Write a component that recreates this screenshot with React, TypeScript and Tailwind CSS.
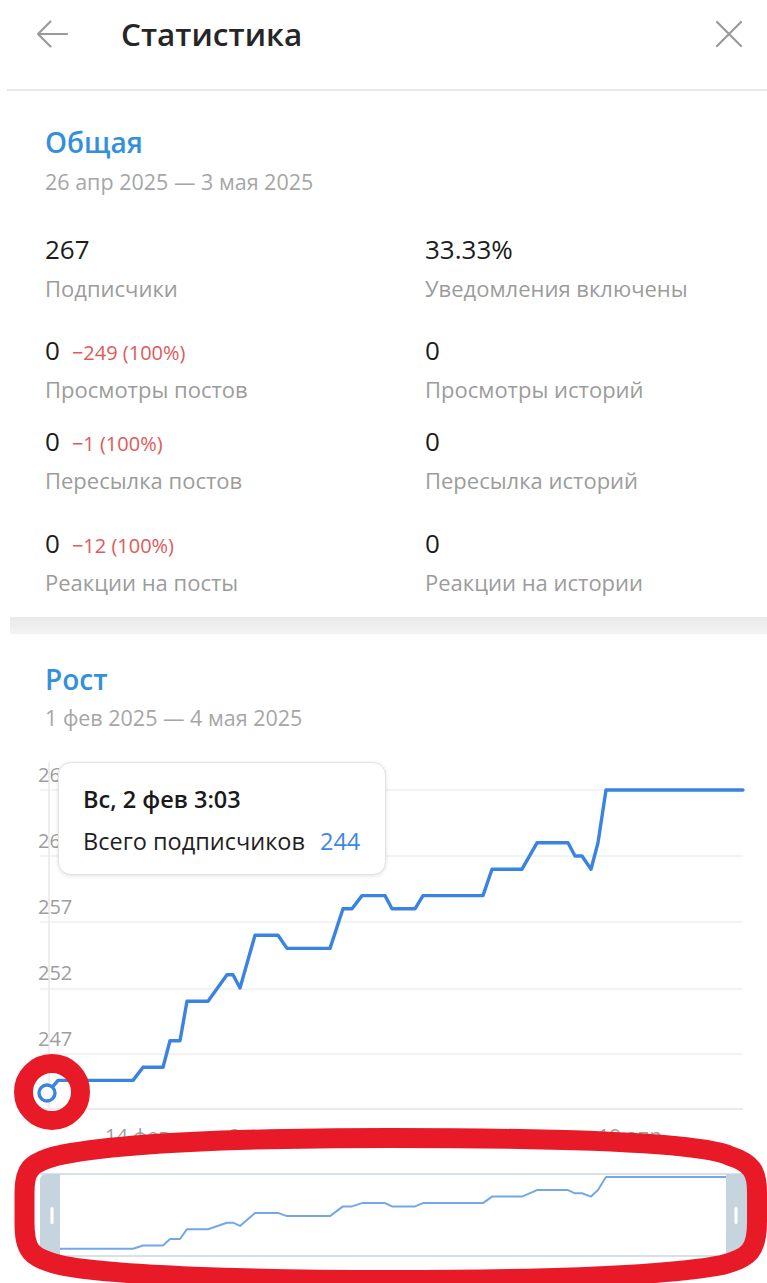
import React from "react";

// Growth series: [x position in the chart, subscribers]
const SERIES: [number, number][] = [
  [47, 244], [58, 245], [133, 245], [143, 246], [163, 246], [170, 248], [180, 248],
  [187, 251], [208, 251], [227, 253], [233, 253], [240, 252], [255, 256], [278, 256],
  [287, 255], [330, 255], [343, 258], [352, 258], [362, 259], [385, 259], [392, 258],
  [415, 258], [423, 259], [483, 259], [492, 261], [522, 261], [537, 263], [568, 263],
  [575, 262], [582, 262], [591, 261], [598, 263], [606, 267], [743, 267],
];

const mainY = (v: number) => 1052 - (v - 247) * 13.2;
const mainPath = SERIES.map(([x, v], i) => `${i ? "L" : "M"}${x} ${mainY(v).toFixed(1)}`).join(" ");
const miniY = (v: number) => 1250 - (v - 244) * 3.26;
const miniPath = SERIES.map(([x, v], i) => `${i ? "L" : "M"}${x} ${miniY(v).toFixed(1)}`).join(" ") + " L725 1175";

const GRID = [788, 854, 920, 987, 1052];
const Y_LABELS: [string, number][] = [["267", 780], ["262", 846], ["257", 912], ["252", 978], ["247", 1044]];
const X_LABELS: [string, number][] = [["14 фев", 105], ["2 мар", 229], ["18 мар", 352], ["3 апр", 476], ["19 апр", 598]];

type Stat = { value: string; delta?: string; label: string };

const ROWS: { mt: string; left: Stat; right: Stat }[] = [
  { mt: "mt-[40px]", left: { value: "267", label: "Подписчики" }, right: { value: "33.33%", label: "Уведомления включены" } },
  { mt: "mt-[34px]", left: { value: "0", delta: "−249 (100%)", label: "Просмотры постов" }, right: { value: "0", label: "Просмотры историй" } },
  { mt: "mt-[24px]", left: { value: "0", delta: "−1 (100%)", label: "Пересылка постов" }, right: { value: "0", label: "Пересылка историй" } },
  { mt: "mt-[35px]", left: { value: "0", delta: "−12 (100%)", label: "Реакции на посты" }, right: { value: "0", label: "Реакции на истории" } },
];

function StatCell({ s }: { s: Stat }) {
  return (
    <div className="flex flex-col">
      <div className="flex items-baseline h-[30px] leading-[30px]">
        <span className="text-[26px] text-[#1c1c1c]">{s.value}</span>
        {s.delta && <span className="ml-[12px] text-[20px] text-[#e05a5a]">{s.delta}</span>}
      </div>
      <div className="mt-[11px] h-[26px] leading-[26px] text-[22px] text-[#9c9c9c]">{s.label}</div>
    </div>
  );
}

export default function App() {
  return (
    <div
      className="relative w-[767px] h-[1283px] overflow-hidden bg-white"
      style={{ fontFamily: '"Open Sans", "Noto Sans", sans-serif' }}
    >
      {/* header */}
      <div className="flex items-center h-[68px]">
        <svg className="ml-[35px] w-[34px] h-[30px]" viewBox="0 0 34 30" fill="none" stroke="#9a9a9a" strokeWidth="2.2" strokeLinecap="round">
          <path d="M3 15 H32 M3 15 L15.5 2.5 M3 15 L15.5 27.5" />
        </svg>
        <div className="ml-[52px] text-[31.5px] font-semibold text-[#262626] leading-none">Статистика</div>
        <svg className="ml-auto mr-[23px] w-[30px] h-[30px]" viewBox="0 0 30 30" fill="none" stroke="#9a9a9a" strokeWidth="2.2" strokeLinecap="round">
          <path d="M3 3 L27 27 M27 3 L3 27" />
        </svg>
      </div>
      <div className="ml-[7px] mt-[21px] h-[2px] bg-[#e9e9e9]" />

      {/* overview */}
      <div className="pl-[45px]">
        <div className="mt-[34px] h-[34px] leading-[34px] text-[28px] font-semibold text-[#3390dc]">Общая</div>
        <div className="mt-[11px] h-[24px] leading-[24px] text-[21.5px] text-[#a6a6a6]">26 апр 2025 — 3 мая 2025</div>
        {ROWS.map((r, i) => (
          <div key={i} className={`${r.mt} grid grid-cols-[380px_1fr]`}>
            <StatCell s={r.left} />
            <StatCell s={r.right} />
          </div>
        ))}
      </div>

      <div className="ml-[10px] mt-[22px] h-[17px] bg-gradient-to-b from-[#e9e9e9] to-[#f3f3f3]" />

      {/* growth */}
      <div className="pl-[45px]">
        <div className="mt-[28px] h-[34px] leading-[34px] text-[28px] font-semibold text-[#3390dc]">Рост</div>
        <div className="mt-[10px] h-[24px] leading-[24px] text-[21.5px] text-[#a6a6a6]">1 фев 2025 — 4 мая 2025</div>
      </div>

      <div className="relative mt-[22px]">
        <svg width="767" height="533" viewBox="0 750 767 533" className="block">
          {GRID.map((y) => (
            <line key={y} x1="40" x2="743" y1={y} y2={y} stroke="#efefef" strokeWidth="1.5" />
          ))}
          <line x1="40" x2="743" y1="1107" y2="1107" stroke="#e3e3e3" strokeWidth="1.5" />
          <line x1="49" x2="49" y1="760" y2="1107" stroke="#e8e8e8" strokeWidth="1.5" />
          {Y_LABELS.map(([t, y]) => (
            <text key={t} x="38" y={y} fontSize="20" fill="#9e9e9e" fontFamily="Open Sans, sans-serif">{t}</text>
          ))}
          {X_LABELS.map(([t, x]) => (
            <text key={t} x={x} y="1141" fontSize="20" fill="#9e9e9e" fontFamily="Open Sans, sans-serif">{t}</text>
          ))}
          <path d={mainPath} fill="none" stroke="#3a83e1" strokeWidth="3.4" strokeLinejoin="round" strokeLinecap="round" />
          <circle cx="47" cy="1091" r="8" fill="white" stroke="#3a83e1" strokeWidth="3.4" />

          {/* range selector */}
          <line x1="40" x2="747" y1="1172" y2="1172" stroke="#cad7e3" strokeWidth="1.5" />
          <line x1="40" x2="747" y1="1254" y2="1254" stroke="#cad7e3" strokeWidth="1.5" />
          <path d={miniPath} fill="none" stroke="#72a8ea" strokeWidth="2" strokeLinejoin="round" />
          <path d="M46 1172 H60 V1254 H46 A6 6 0 0 1 40 1248 V1178 A6 6 0 0 1 46 1172 Z" fill="#c6d4e0" />
          <rect x="50.5" y="1205" width="3" height="17" rx="1.5" fill="white" />
          <path d="M726 1172 H741 A6 6 0 0 1 747 1178 V1248 A6 6 0 0 1 741 1254 H726 Z" fill="#c6d4e0" />
          <rect x="734.5" y="1205" width="3" height="17" rx="1.5" fill="white" />
        </svg>

        {/* tooltip */}
        <div className="absolute left-[58px] top-[10px] w-[328px] h-[113px] rounded-[13px] bg-white border border-[#e2e2e2] shadow-[0_1px_4px_rgba(0,0,0,0.12)] pl-[24px]">
          <div className="mt-[21px] h-[30px] leading-[30px] text-[23.5px] font-semibold text-[#1a1a1a]">Вс, 2 фев 3:03</div>
          <div className="mt-[12px] flex h-[30px] leading-[30px] text-[23.5px]">
            <span className="text-[#1f1f1f]">Всего подписчиков</span>
            <span className="ml-[15px] text-[#3d86e5]">244</span>
          </div>
        </div>
      </div>

      {/* red marks on top */}
      <svg className="absolute inset-0 pointer-events-none" width="767" height="1283" viewBox="0 0 767 1283">
        <circle cx="52" cy="1092" r="28.5" fill="none" stroke="#e81a28" strokeWidth="19" />
        <path
          d="M390 1138 C560 1138 700 1142 730 1156 C752 1163 757 1172 757 1192 L757 1222 C757 1250 750 1258 722 1265 C660 1277 520 1280 390 1280 C260 1280 110 1276 60 1265 C30 1258 24.5 1250 24.5 1222 L24.5 1192 C24.5 1170 30 1163 56 1156 C120 1142 250 1138 390 1138 Z"
          fill="none"
          stroke="#e81a28"
          strokeWidth="20"
        />
      </svg>
    </div>
  );
}
